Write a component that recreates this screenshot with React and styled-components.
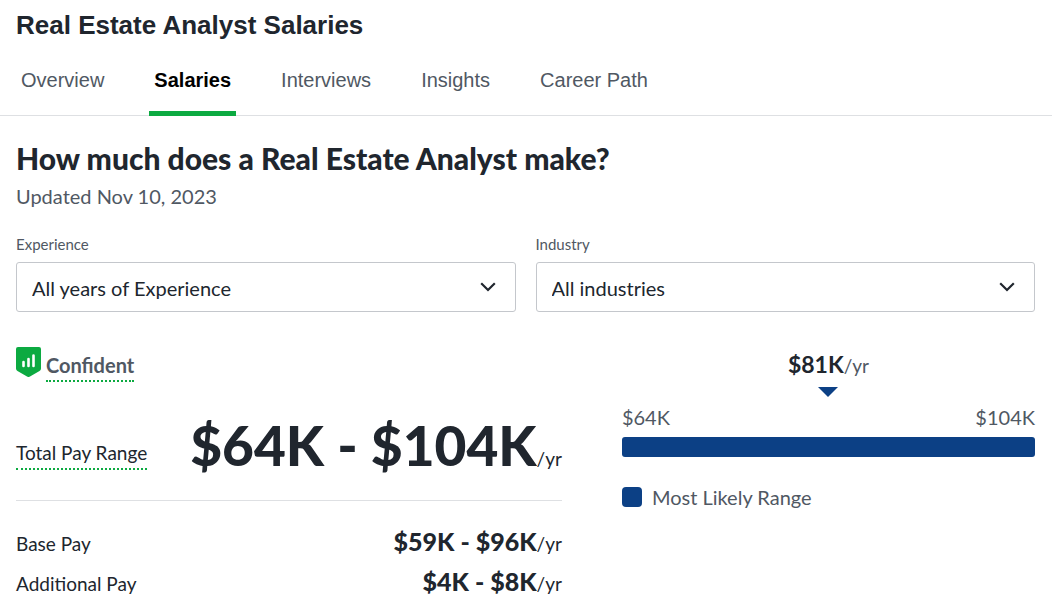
import React from "react";
import styled, { createGlobalStyle } from "styled-components";

const ink = "#20262e";
const muted = "#505863";
const green = "#0caa41";
const blue = "#0c4085";

const GlobalStyle = createGlobalStyle`
  *, *::before, *::after { box-sizing: border-box; }
  body {
    margin: 0;
    background: #fff;
    color: ${ink};
    font-family: Lato, "Noto Sans", sans-serif;
    font-size: 20px;
    line-height: 28px;
  }
`;

const Title = styled.h1`
  margin: 0;
  padding: 9px 16px 0;
  font: 700 26px/32px "Liberation Sans", Arial, sans-serif;
`;

const Tabs = styled.nav`
  display: flex;
  gap: 40px;
  margin-top: 25px;
  padding: 0 16px;
  border-bottom: 1px solid #dee0e3;
`;

const Tab = styled.a`
  margin-bottom: -1px;
  padding: 0 5px 17px;
  border-bottom: 5px solid ${(p) => (p.$active ? green : "transparent")};
  color: ${(p) => (p.$active ? "#000" : muted)};
  font: ${(p) => (p.$active ? 700 : 400)} 20px/28px "Liberation Sans", Arial, sans-serif;
  text-decoration: none;
  white-space: nowrap;
`;

const Main = styled.main`
  padding: 24px 17px 16px 16px;
`;

const Heading = styled.h2`
  margin: 0;
  font-size: 30px;
  line-height: 36px;
  font-weight: 900;
`;

const Updated = styled.p`
  margin: 6px 0 0;
  color: ${muted};
`;

const Filters = styled.div`
  display: grid;
  grid-template-columns: 1fr 1fr;
  gap: 20px;
  margin-top: 24px;
`;

const Field = styled.div`
  display: flex;
  flex-direction: column;
  gap: 8px;
`;

const Label = styled.label`
  color: ${muted};
  font-size: 15px;
  line-height: 20px;
`;

const SelectBox = styled.div`
  display: grid;
  align-items: center;

  & > * { grid-area: 1 / 1; }
`;

const Select = styled.select`
  appearance: none;
  width: 100%;
  height: 50px;
  padding: 2px 48px 0 15px;
  border: 1px solid #c4c7cc;
  border-radius: 3px;
  background: #fff;
  color: ${ink};
  font: inherit;
`;

const Chevron = styled.svg`
  justify-self: end;
  width: 16px;
  height: 10px;
  margin-right: 20px;
  pointer-events: none;
`;

const Columns = styled.div`
  display: grid;
  grid-template-columns: 37fr 28fr;
  gap: 60px;
  margin-top: 35px;
`;

const Confidence = styled.div`
  display: flex;
  align-items: flex-start;
  gap: 5px;
`;

const Shield = styled.svg`
  width: 25px;
  height: 30px;
`;

const Hint = styled.span`
  padding-bottom: 4px;
  border-bottom: 2px dotted ${green};
`;

const Confident = styled(Hint)`
  padding-top: 8px;
  color: ${muted};
  font-weight: 700;
  line-height: 21px;
`;

const Row = styled.div`
  display: flex;
  align-items: baseline;
  justify-content: space-between;
`;

const PayRow = styled(Row)`
  font-size: 19px;
  line-height: 40px;
`;

const TotalRow = styled(Row)`
  align-items: flex-end;
  margin-top: 41px;
  padding-bottom: 30px;
  border-bottom: 1px solid #dee0e3;
  font-size: 19px;
  line-height: 22px;
`;

const Amount = styled.div`
  white-space: nowrap;

  strong {
    font-size: ${(p) => (p.$large ? 55 : 25)}px;
    line-height: ${(p) => (p.$large ? 44 : 26)}px;
    font-weight: 900;
  }
`;

const Breakdown = styled.div`
  padding-top: 23px;
`;

const Median = styled.div`
  display: flex;
  flex-direction: column;
  align-items: center;
  gap: 4px;
  padding-top: 2px;
  color: ${muted};
`;

const MedianValue = styled.div`
  font-size: 19px;
  line-height: 34px;

  strong {
    color: ${ink};
    font-size: 23px;
    line-height: 28px;
  }
`;

const Pointer = styled.svg`
  width: 20px;
  height: 10px;
`;

const RangeEnds = styled(Row)`
  margin-top: 6px;
  color: ${muted};
`;

const RangeBar = styled.div`
  height: 20px;
  margin-top: 6px;
  border-radius: 3px;
  background: ${blue};
`;

const Legend = styled.div`
  display: flex;
  align-items: center;
  gap: 10px;
  margin-top: 26px;
  color: ${muted};
`;

const Swatch = styled.span`
  width: 20px;
  height: 20px;
  border-radius: 4px;
  background: ${blue};
`;

const tabs = ["Overview", "Salaries", "Interviews", "Insights", "Career Path"];
const breakdown = [
  ["Base Pay", "$59K - $96K"],
  ["Additional Pay", "$4K - $8K"],
];

function Filter({ id, label, value }) {
  return (
    <Field>
      <Label htmlFor={id}>{label}</Label>
      <SelectBox>
        <Select id={id}>
          <option>{value}</option>
        </Select>
        <Chevron viewBox="0 0 16 10" aria-hidden="true">
          <path d="M1.200 1.200 8 8l6.800-6.800" fill="none" stroke={ink} strokeWidth="2.200" />
        </Chevron>
      </SelectBox>
    </Field>
  );
}

export default function App() {
  return (
    <>
      <GlobalStyle />
      <Title>Real Estate Analyst Salaries</Title>
      <Tabs>
        {tabs.map((t) => (
          <Tab key={t} href="#" $active={t === "Salaries"}>{t}</Tab>
        ))}
      </Tabs>
      <Main>
        <Heading>How much does a Real Estate Analyst make?</Heading>
        <Updated>Updated Nov 10, 2023</Updated>
        <Filters>
          <Filter id="experience" label="Experience" value="All years of Experience" />
          <Filter id="industry" label="Industry" value="All industries" />
        </Filters>
        <Columns>
          <section>
            <Confidence>
              <Shield viewBox="0 0 25 30" aria-hidden="true">
                <path d="M2 0h21a2 2 0 0 1 2 2v19.500a3 3 0 0 1-1.500 2.600l-9.500 5.500a3 3 0 0 1-3 0l-9.500-5.500A3 3 0 0 1 0 21.500V2a2 2 0 0 1 2-2z" fill={green} />
                <path d="M7.500 15v4M12.500 12v7M17.500 8.500V19" stroke="#fff" strokeWidth="2.600" strokeLinecap="round" />
              </Shield>
              <Confident>Confident</Confident>
            </Confidence>
            <TotalRow>
              <Hint>Total Pay Range</Hint>
              <Amount $large><strong>$64K - $104K</strong>/yr</Amount>
            </TotalRow>
            <Breakdown>
              {breakdown.map(([name, pay]) => (
                <PayRow key={name}>
                  <span>{name}</span>
                  <Amount><strong>{pay}</strong>/yr</Amount>
                </PayRow>
              ))}
            </Breakdown>
          </section>
          <section>
            <Median>
              <MedianValue><strong>$81K</strong>/yr</MedianValue>
              <Pointer viewBox="0 0 20 10" aria-hidden="true">
                <path d="M0 0h20L10 10z" fill={blue} />
              </Pointer>
            </Median>
            <RangeEnds>
              <span>$64K</span>
              <span>$104K</span>
            </RangeEnds>
            <RangeBar />
            <Legend>
              <Swatch />
              Most Likely Range
            </Legend>
          </section>
        </Columns>
      </Main>
    </>
  );
}
